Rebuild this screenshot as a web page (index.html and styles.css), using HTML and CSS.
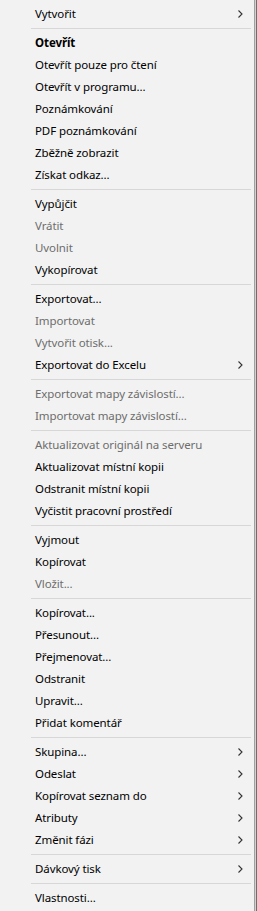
FILE: index.html
```html
<!DOCTYPE html>
<html lang="cs">
<head>
    <meta charset="UTF-8">
    <title>Kontextová nabídka</title>
    <link rel="stylesheet" href="styles.css">
</head>
<body>
    <div class="screen">
        <ul class="menu">
            <li class="item sub">Vytvořit</li>
            <li class="sep"></li>
            <li class="item bold">Otevřít</li>
            <li class="item">Otevřít pouze pro čtení</li>
            <li class="item">Otevřít v programu...</li>
            <li class="item">Poznámkování</li>
            <li class="item">PDF poznámkování</li>
            <li class="item">Zběžně zobrazit</li>
            <li class="item">Získat odkaz...</li>
            <li class="sep"></li>
            <li class="item">Vypůjčit</li>
            <li class="item off">Vrátit</li>
            <li class="item off">Uvolnit</li>
            <li class="item">Vykopírovat</li>
            <li class="sep"></li>
            <li class="item">Exportovat...</li>
            <li class="item off">Importovat</li>
            <li class="item off">Vytvořit otisk...</li>
            <li class="item sub">Exportovat do Excelu</li>
            <li class="sep"></li>
            <li class="item off">Exportovat mapy závislostí...</li>
            <li class="item off">Importovat mapy závislostí...</li>
            <li class="sep"></li>
            <li class="item off">Aktualizovat originál na serveru</li>
            <li class="item">Aktualizovat místní kopii</li>
            <li class="item">Odstranit místní kopii</li>
            <li class="item">Vyčistit pracovní prostředí</li>
            <li class="sep"></li>
            <li class="item">Vyjmout</li>
            <li class="item">Kopírovat</li>
            <li class="item off">Vložit...</li>
            <li class="sep"></li>
            <li class="item">Kopírovat...</li>
            <li class="item">Přesunout...</li>
            <li class="item">Přejmenovat...</li>
            <li class="item">Odstranit</li>
            <li class="item">Upravit...</li>
            <li class="item">Přidat komentář</li>
            <li class="sep"></li>
            <li class="item sub">Skupina...</li>
            <li class="item sub">Odeslat</li>
            <li class="item sub">Kopírovat seznam do</li>
            <li class="item sub">Atributy</li>
            <li class="item sub">Změnit fázi</li>
            <li class="sep"></li>
            <li class="item sub">Dávkový tisk</li>
            <li class="sep"></li>
            <li class="item">Vlastnosti...</li>
        </ul>
        <div class="edge"></div>
    </div>

    <script>
        // chevron for items that open a submenu
        document.querySelectorAll('.item.sub').forEach(function (li) {
            li.insertAdjacentHTML('beforeend',
                '<svg class="arrow" width="5" height="8" viewBox="0 0 5 8"><path d="M0.5 0.5 L4 4 L0.5 7.5" fill="none" stroke="#333" stroke-width="1.1"/></svg>');
        });
    </script>
</body>
</html>
```

FILE: styles.css
```css
body {
    margin: 0;
    padding: 0;
    background-color: #f2f2f2;
    font-family: 'Noto Sans', sans-serif;
    font-size: 11.5px;
    letter-spacing: -0.1px;
    color: #000000;
}

.screen {
    display: flex;
    width: 257px;
    height: 911px;
    overflow: hidden;
}

.menu {
    list-style: none;
    margin: 0;
    padding: 3px 0 2px 0;
    width: 254px;
    background-color: #f2f2f2;
    border-right: 1px solid #a0a0a0;
}

.edge {
    width: 1px;
    background-color: #d2d2d2;
    border-right: 1px solid #6e6e6e;
}

.item {
    height: 22px;
    line-height: 22px;
    padding-left: 35px;
    padding-right: 11px;
    display: flex;
    align-items: center;
    justify-content: space-between;
    white-space: nowrap;
}

.bold {
    font-weight: bold;
}

.off {
    color: #6d6d6d;
}

.arrow {
    display: block;
}

.sep {
    height: 1px;
    margin: 3px 3px 3px 31px;
    background-color: #d7d7d7;
}
```
